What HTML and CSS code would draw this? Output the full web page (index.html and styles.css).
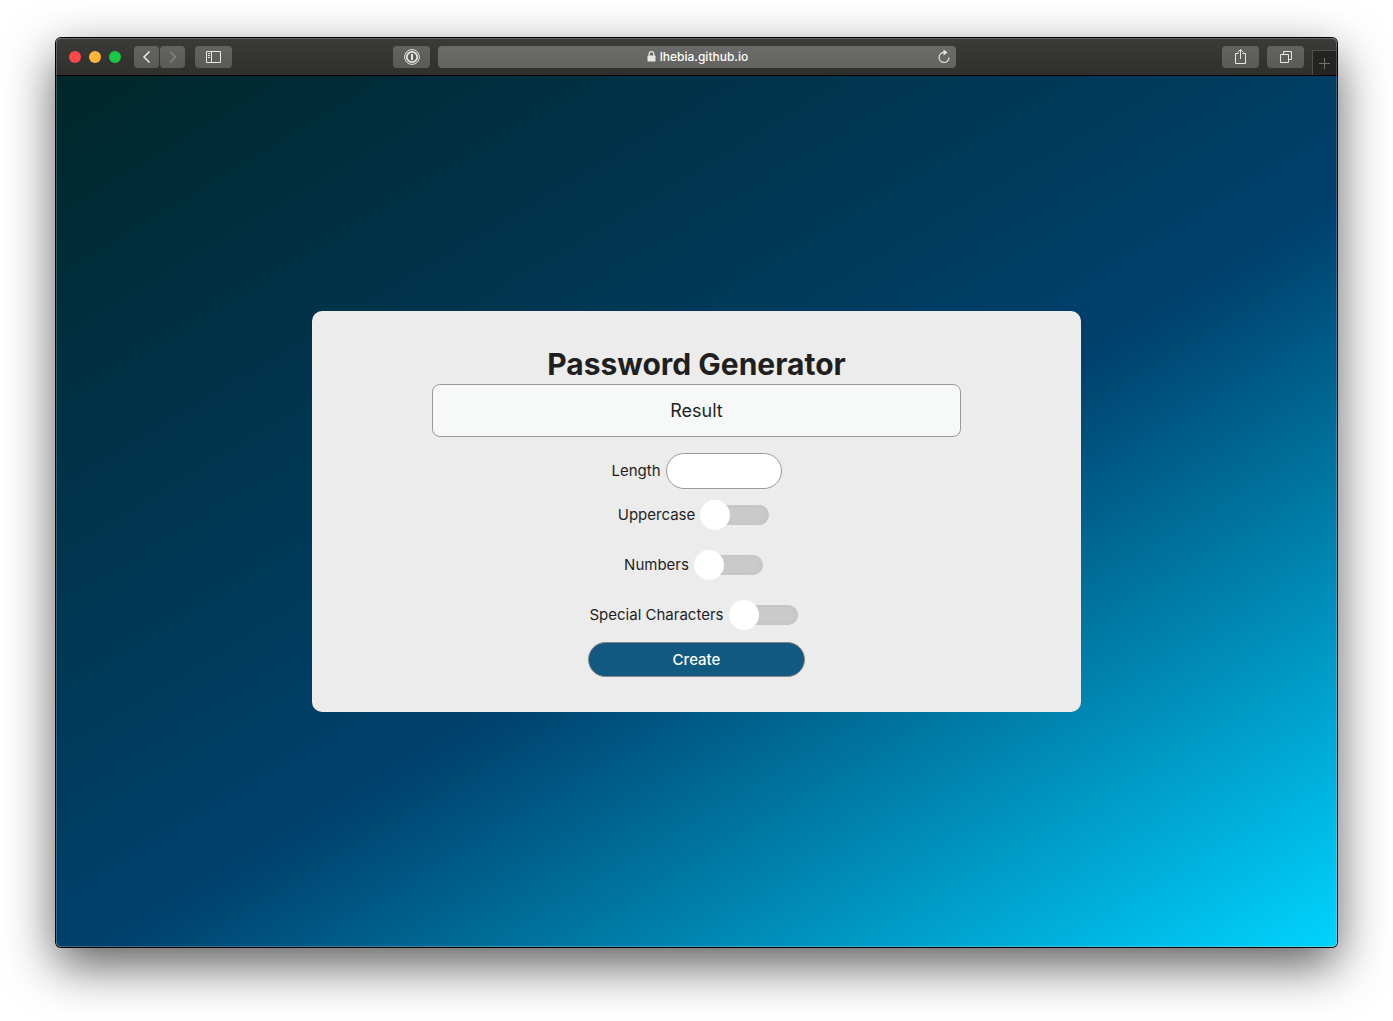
FILE: index.html
```html
<!DOCTYPE html>
<html lang="en">
<head>
  <meta charset="utf-8">
  <title>Password Generator</title>
  <link rel="stylesheet" href="styles.css">
</head>
<body>
  <div class="window">
    <header class="toolbar">
      <div class="side side-left">
        <div class="lights">
          <span class="light red"></span>
          <span class="light yellow"></span>
          <span class="light green"></span>
        </div>
        <div class="history">
          <button class="tool small" type="button" aria-label="Back">
            <svg width="25" height="22" viewBox="0 0 25 22"><path d="M15.500 5.500 10 11l5.500 5.500" stroke-width="1.600"/></svg>
          </button>
          <button class="tool small dim" type="button" aria-label="Forward">
            <svg width="25" height="22" viewBox="0 0 25 22"><path d="M10 5.500 15.500 11 10 16.500" stroke-width="1.600"/></svg>
          </button>
        </div>
        <button class="tool" type="button" aria-label="Show sidebar">
          <svg width="37" height="22" viewBox="0 0 37 22"><path d="M11.500 5.500h14v11h-14zM16.500 5.500v11M13 7.500h2M13 9.500h2M13 11.500h2"/></svg>
        </button>
      </div>
      <div class="middle">
        <button class="tool" type="button" aria-label="Password manager">
          <svg width="37" height="22" viewBox="0 0 37 22"><circle cx="19" cy="11" r="7.400" stroke-width="1"/><circle cx="19" cy="11" r="5.200" stroke-width="1.800"/><path d="M19 8v6" stroke-width="2"/></svg>
        </button>
        <div class="address">
          <span class="site">
            <svg width="9" height="11" viewBox="0 0 9 11"><path d="M2.200 5V3a2.300 2.300 0 0 1 4.600 0v2" stroke-width="1.200"/><rect class="solid" x="0.500" y="4.600" width="8" height="5.900" rx="0.600"/></svg>
            <span>lhebia.github.io</span>
          </span>
          <button class="reload" type="button" aria-label="Reload">
            <svg width="14" height="16" viewBox="0 0 14 16"><path d="M7.500 3.500A5 5 0 1 0 12 8.500" stroke-width="1.200"/><path class="solid" d="M6.500 0.500v6L10.500 3.500z"/></svg>
          </button>
        </div>
      </div>
      <div class="side side-right">
        <button class="tool" type="button" aria-label="Share">
          <svg width="37" height="22" viewBox="0 0 37 22"><path d="M16.500 7.500h-3v10h10v-10h-3M18.500 13V4M15.500 6.500l3-3 3 3"/></svg>
        </button>
        <button class="tool" type="button" aria-label="Show tabs">
          <svg width="37" height="22" viewBox="0 0 37 22"><path d="M13.500 8.500h8v8h-8zM16.500 8V5.500h8v8H22"/></svg>
        </button>
        <button class="new-tab" type="button" aria-label="New tab">
          <svg width="24" height="24" viewBox="0 0 24 24"><path d="M6 12.500h11M11.500 7v11"/></svg>
        </button>
      </div>
    </header>
    <main class="page">
      <form class="card">
        <h1>Password Generator</h1>
        <output class="result">Result</output>
        <div class="row length"><label for="length">Length</label><input class="length-box" id="length" type="text" inputmode="numeric"></div>
        <div class="row"><label for="uppercase">Uppercase</label><input class="switch" id="uppercase" type="checkbox"></div>
        <div class="row"><label for="numbers">Numbers</label><input class="switch" id="numbers" type="checkbox"></div>
        <div class="row"><label for="special">Special Characters</label><input class="switch" id="special" type="checkbox"></div>
        <button class="create" type="button">Create</button>
      </form>
    </main>
  </div>
</body>
</html>
```
FILE: styles.css
```css
* {
  box-sizing: border-box;
}

body {
  display: flex;
  min-height: 100vh;
  margin: 0;
  padding: 38px 56px 74px;
  background: #fff;
  color: #1f1f1f;
  font: 15px/20px Inter, "Liberation Sans", sans-serif;
}

button {
  margin: 0;
  padding: 0;
  border: 0;
  font: inherit;
}

svg {
  display: block;
  fill: none;
  stroke: #e6e6e4;
}

.solid {
  fill: #e6e6e4;
  stroke: none;
}

.window {
  position: relative;
  display: flex;
  flex: 1;
  flex-direction: column;
  border-radius: 5px;
  box-shadow: 0 0 0 1px #000, 0 18px 50px rgba(0, 0, 0, 0.65);
}

/* light rim along the inside edge of the window */
.window::after {
  position: absolute;
  inset: 0;
  border: 1px solid rgba(255, 255, 255, 0.22);
  border-radius: 5px;
  content: "";
  pointer-events: none;
}

.toolbar {
  display: flex;
  align-items: center;
  height: 38px;
  border-bottom: 1px solid #000;
  border-radius: 5px 5px 0 0;
  background: linear-gradient(#3b3b39, #2f2f2e);
}

.side {
  display: flex;
}

.side-left {
  flex: 324 1 0;
  align-items: center;
  padding-left: 13px;
}

.lights {
  display: flex;
  gap: 8px;
  margin-right: 13px;
}

.light {
  width: 12px;
  height: 12px;
  border-radius: 50%;
}

.red {
  background: #ff4848;
}

.yellow {
  background: #ffb33a;
}

.green {
  background: #1ac846;
}

.history {
  display: flex;
  gap: 1px;
  margin-right: 10px;
}

.tool {
  width: 37px;
  height: 22px;
  border-radius: 4px;
  background: linear-gradient(#636361, #5a5a59);
}

.small {
  width: 25px;
}

.dim svg {
  stroke: #858583;
}

.middle {
  display: flex;
  flex: 0 1 563px;
  gap: 8px;
}

.address {
  display: flex;
  flex: 1;
  align-items: center;
  padding: 0 5px 0 20px;
  border-radius: 4px;
  background: linear-gradient(#6b6b69, #636362);
}

.site {
  display: flex;
  flex: 1;
  align-items: center;
  justify-content: center;
  gap: 4px;
  color: #fff;
  font-size: 12px;
  font-weight: 500;
}

.reload {
  background: none;
}

.side-right {
  flex: 381 1 0;
  align-items: center;
  align-self: stretch;
  justify-content: flex-end;
  gap: 8px;
}

.new-tab {
  align-self: flex-end;
  border-top: 1px solid #50504e;
  border-left: 1px solid #50504e;
  background: #242423;
}

.new-tab svg {
  stroke: #70706e;
}

.page {
  display: flex;
  flex: 1;
  align-items: center;
  justify-content: center;
  border-radius: 0 0 5px 5px;
  background: linear-gradient(149deg, #00272b, #00416d 55%, #00d4ff);
}

.card {
  display: flex;
  flex-direction: column;
  align-items: center;
  width: 60%;
  padding: 34px 32px 35px;
  border-radius: 10px;
  background: #ececec;
}

h1 {
  margin: 0;
  font-size: 30px;
  font-weight: 700;
  line-height: 39px;
}

.result {
  width: 75%;
  margin-bottom: 16px;
  padding: 17px 16px 16px;
  border: 1px solid #999;
  border-radius: 8px;
  background: #f7f9f9;
  font-size: 18px;
  line-height: 18px;
  text-align: center;
}

.row {
  display: flex;
  align-items: center;
  justify-content: center;
  gap: 5px;
  height: 50px;
}

.row.length {
  height: 36px;
  margin-bottom: 1px;
}

.length-box {
  width: 116px;
  height: 36px;
  padding: 0 16px;
  border: 1px solid #999;
  border-radius: 18px;
  background: #fff;
  font: inherit;
}

.switch {
  position: relative;
  width: 69px;
  height: 20px;
  margin: 0 6px 0 0;
  border-radius: 10px;
  background: #cacaca;
  box-shadow: inset 0 0 6px rgba(0, 0, 0, 0.05);
  appearance: none;
}

.switch::before {
  position: absolute;
  top: -5px;
  left: 0;
  width: 30px;
  height: 30px;
  border-radius: 50%;
  background: #fff;
  content: "";
}

.switch:checked::before {
  left: 39px;
}

.create {
  width: 217px;
  height: 35px;
  margin-top: 2px;
  border: 1px solid #858585;
  border-radius: 18px;
  background: #115980;
  color: #fff;
  font-weight: 500;
}
```
